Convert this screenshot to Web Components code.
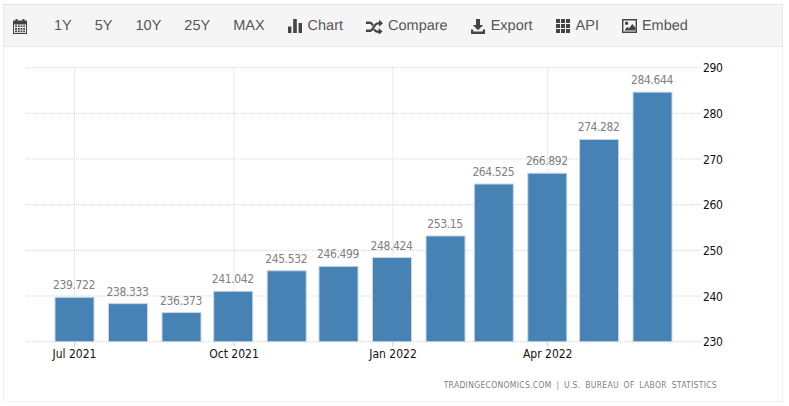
<!DOCTYPE html>
<html>
<head>
<meta charset="utf-8">
<title>Chart</title>
<style>
    html, body { margin: 0; padding: 0; background: #fff; }
    body { padding: 4px 5px 0 3px; }
</style>
</head>
<body>
<chart-card>
    <chart-toolbar slot="toolbar">
        <tool-button icon="calendar" class="first"></tool-button>
        <tool-button>1Y</tool-button>
        <tool-button>5Y</tool-button>
        <tool-button>10Y</tool-button>
        <tool-button>25Y</tool-button>
        <tool-button>MAX</tool-button>
        <tool-button icon="chart">Chart</tool-button>
        <tool-button icon="compare">Compare</tool-button>
        <tool-button icon="export">Export</tool-button>
        <tool-button icon="api">API</tool-button>
        <tool-button icon="embed">Embed</tool-button>
    </chart-toolbar>
    <bar-chart></bar-chart>
</chart-card>

<script>
const ICONS = {
    calendar: `<path fill-rule="evenodd" d="M0 2.500h2.500V1h2v1.500h5V1h2v1.500H14V16H0zM1 6.500V15h12V6.500zM2 7.500h2.200v1.600H2zM5 7.500h1.800v1.600H5zM7.600 7.500h1.800v1.600H7.600zM10.200 7.500H12v1.600h-1.800zM2 10h2.200v1.800H2zM5 10h1.800v1.800H5zM7.600 10h1.800v1.800H7.600zM10.200 10H12v1.800h-1.800zM2 12.600h2.200v1.600H2zM5 12.600h1.800v1.600H5zM7.600 12.600h1.800v1.600H7.600zM10.200 12.600H12v1.600h-1.800z"/>`,
    chart: `<path d="M0 8.500h3.400V15H0zM5.200 1h3.600v14H5.200zM10.600 5h3.400v10h-3.400z"/>`,
    compare: `<path d="M0 3.600h3.600c1.600 0 2.500.8 3.400 2L7.800 6.700 6.400 8.400 5.500 7.200C5 6.500 4.500 6.100 3.500 6.100H0zM0 14.100v-2.500h3.500c1 0 1.500-.4 2-1.100l2.800-3.900c1-1.400 2-2.400 3.900-2.400h.8V1.800l4 3.500-4 3.500V6.400h-.8c-1 0-1.500.4-2 1.100l-2.800 3.900c-1 1.400-2 2.700-3.800 2.700zM8.700 10.500l1.100 1.200c.4.400.9.700 2 .7h.8v-2.400l4 3.500-4 3.500v-2.300h-.8c-2 0-3-.9-3.700-1.800l-.9-1z"/>`,
    export: `<path d="M5 1h4v6h3.200L7 12.200 1.800 7H5zM0 11.500h2.200v2.100h9.600v-2.100H14V16H0z"/>`,
    api: `<path d="M0 1h4v4H0zM5 1h4v4H5zM10 1h4v4h-4zM0 6h4v4H0zM5 6h4v4H5zM10 6h4v4h-4zM0 11h4v4H0zM5 11h4v4H5zM10 11h4v4h-4z"/>`,
    embed: `<path fill-rule="evenodd" d="M0 1h15v14H0zM1.400 2.400v11.200h12.200V2.400zM2.500 12.500l2.800-3.700 1.700 1.600 3.300-4.400 3 3.500v3zM4.600 3.600a1.700 1.700 0 1 1 0 3.400 1.700 1.700 0 0 1 0-3.400z"/>`
};

class ToolButton extends HTMLElement {
    constructor() {
        super();
        this.shadowDOM = this.attachShadow({mode: "open"});
    }

    connectedCallback() {
        const icon = ICONS[this.getAttribute("icon")];
        const width = this.getAttribute("icon") === "compare" ? 17 : 15;
        this.shadowDOM.innerHTML = `
            <style>
            :host {
                display: inline-flex;
                align-items: center;
                gap: 5px;
                color: #555;
                font-size: 14.500px;
                line-height: 20px;
                white-space: nowrap;
                text-rendering: geometricPrecision;
                cursor: pointer;
            }
            :host(.first) {
                margin-right: 3px;
            }
            svg {
                display: block;
                fill: #444;
                width: ${width}px;
                height: 16px;
                flex: none;
            }
            </style>
            ${icon ? `<svg viewBox="0 0 ${width} 16">${icon}</svg>` : ""}
            <slot></slot>`;
    }
}

class ChartToolbar extends HTMLElement {
    constructor() {
        super();
        this.attachShadow({mode: "open"}).innerHTML = `
            <style>
            :host {
                display: flex;
                align-items: center;
                gap: 23px;
                height: 41px;
                padding: 0 0 0 9px;
                background: #f5f5f5;
                border: 1px solid #e7e7e7;
                font-family: "Liberation Sans", Arial, sans-serif;
            }
            </style>
            <slot></slot>`;
    }
}

class ChartCard extends HTMLElement {
    constructor() {
        super();
        this.attachShadow({mode: "open"}).innerHTML = `
            <style>
            :host {
                display: block;
                width: 780px;
                box-sizing: border-box;
                border: 1px solid #f0f0f0;
                border-top: 0;
                height: 398px;
            }
            ::slotted(chart-toolbar) {
                margin: 0 -1px;
            }
            </style>
            <slot name="toolbar"></slot>
            <slot></slot>`;
    }
}

class BarChart extends HTMLElement {
    constructor() {
        super();
        this.shadowDOM = this.attachShadow({mode: "open"});
    }

    connectedCallback() {
        // values per month, Jul 2021 to Jun 2022
        const bars = [
            ["239.722", 55], ["238.333", 108.500], ["236.373", 162], ["241.042", 213.700],
            ["245.532", 267.200], ["246.499", 319], ["248.424", 372.500], ["253.15", 426],
            ["264.525", 474.300], ["266.892", 527.800], ["274.282", 579.600], ["284.644", 633]
        ];
        const y = v => 341.700 - (v - 230) * 4.567;

        const grid = [230, 240, 250, 260, 270, 280, 290].map(v => `
            <line class="grid" x1="26" x2="702" y1="${y(v)}" y2="${y(v)}"/>
            <text class="yl" x="703" y="${y(v) + 4.500}">${v}</text>`).join("");

        const months = [[74.500, "Jul 2021"], [234, "Oct 2021"], [393, "Jan 2022"], [547.700, "Apr 2022"]];
        const xaxis = months.map(([x, t]) => `
            <line class="grid" x1="${x}" x2="${x}" y1="${y(290)}" y2="${y(230)}"/>
            <line class="tick" x1="${x}" x2="${x}" y1="${y(230)}" y2="${y(230) + 5}"/>
            <text class="xl" x="${x}" y="358">${t}</text>`).join("");

        const rects = bars.map(([v, x]) => `
            <rect x="${x}" y="${y(+v)}" width="39" height="${341.700 - y(+v)}"/>
            <text class="val" x="${x + 19}" y="${y(+v) - 8}">${v}</text>`).join("");

        this.shadowDOM.innerHTML = `
            <style>
            :host {
                display: block;
            }
            svg {
                display: block;
                font-family: "DejaVu Sans Condensed", "DejaVu Sans", sans-serif;
                font-stretch: condensed;
                font-size: 12px;
                letter-spacing: -.4px;
            }
            .grid {
                stroke: #d4d4d4;
                stroke-width: 1;
                stroke-dasharray: 1 1;
            }
            .tick {
                stroke: #ccc;
            }
            rect {
                fill: #4682b4;
                stroke: #c5d7e7;
                stroke-width: 1;
            }
            .yl {
                fill: #111;
            }
            .xl {
                fill: #111;
                letter-spacing: 0;
                text-anchor: middle;
            }
            .val {
                fill: #808080;
                text-anchor: middle;
            }
            .src {
                fill: #808080;
                font-size: 8.500px;
                letter-spacing: .3px;
                word-spacing: 2px;
                text-anchor: end;
            }
            </style>
            <svg width="778" height="354" viewBox="4 47 778 354">
                ${grid}
                ${xaxis}
                ${rects}
                <text class="src" x="717" y="388">TRADINGECONOMICS.COM | U.S. BUREAU OF LABOR STATISTICS</text>
            </svg>`;
    }
}

customElements.define("tool-button", ToolButton);
customElements.define("chart-toolbar", ChartToolbar);
customElements.define("chart-card", ChartCard);
customElements.define("bar-chart", BarChart);
</script>
</body>
</html>
